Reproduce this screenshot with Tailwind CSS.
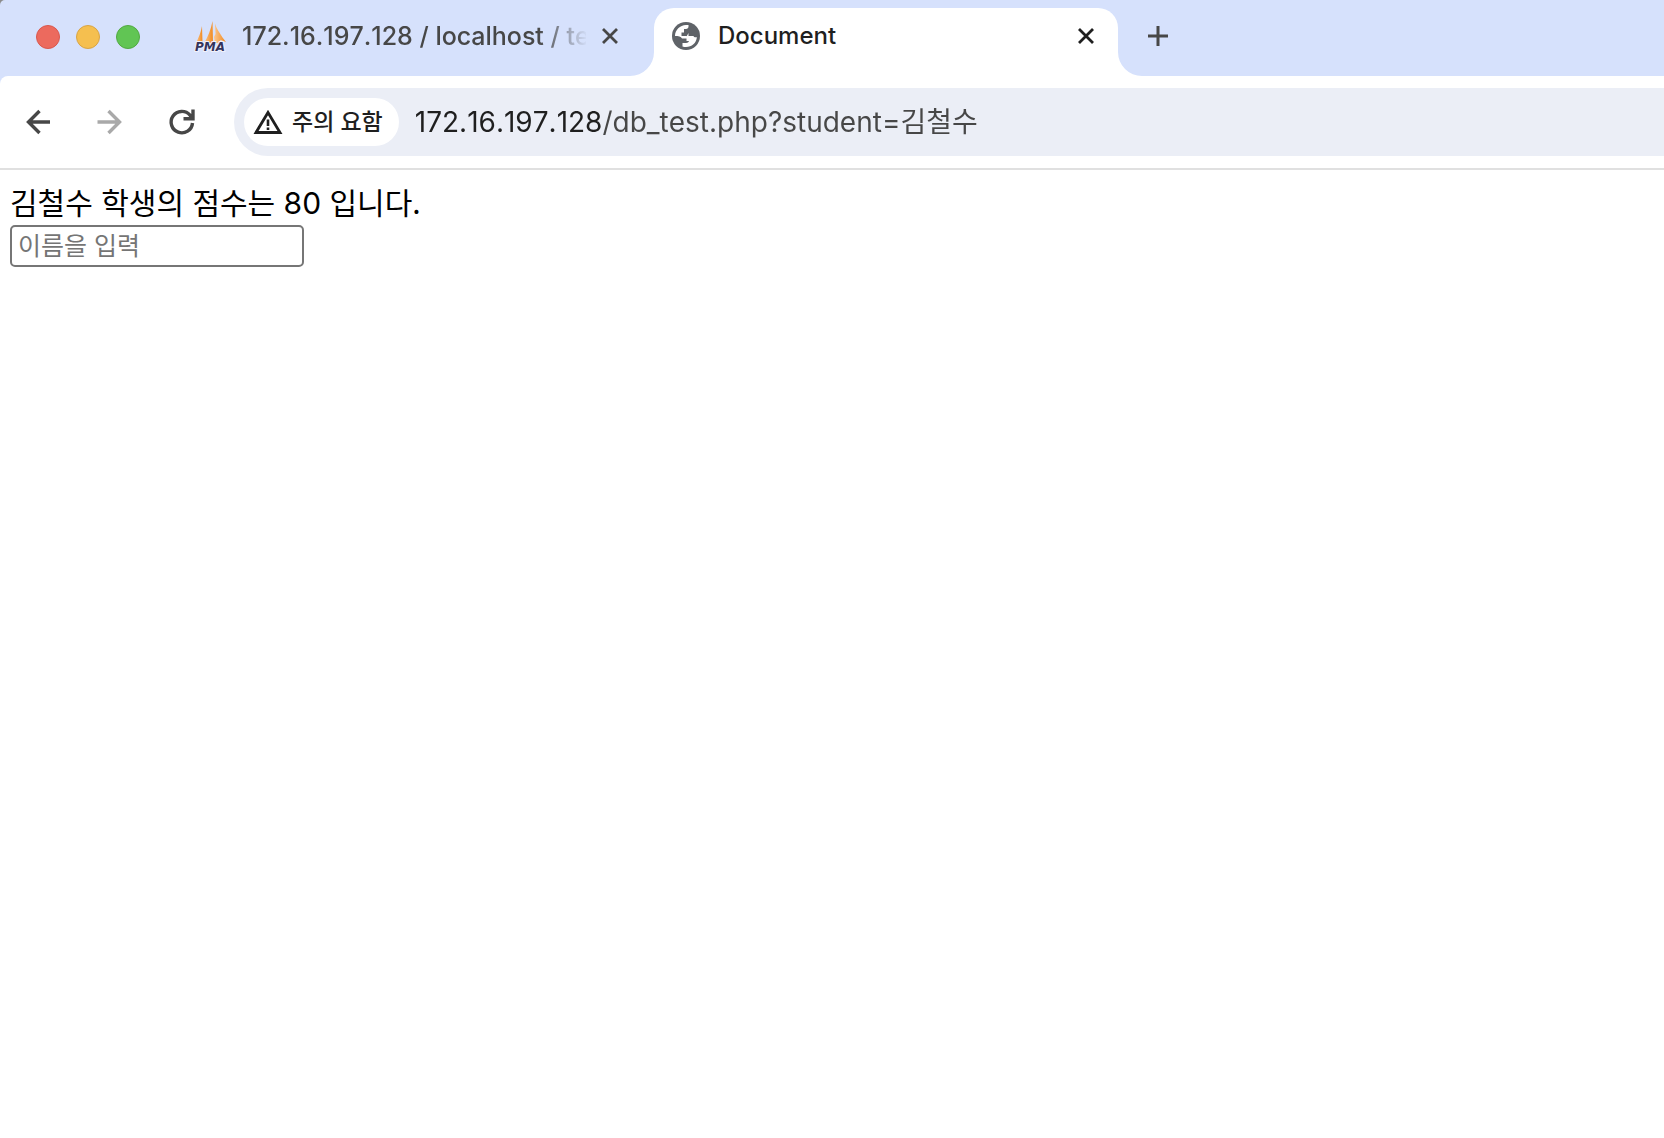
<!DOCTYPE html>
<html lang="ko">
<head>
  <meta charset="UTF-8" />
  <meta name="viewport" content="width=device-width, initial-scale=1.0" />
  <title>Document</title>
  <script src="https://cdn.jsdelivr.net/npm/@tailwindcss/browser@4"></script>
</head>
<body class="bg-white min-h-screen font-[Inter,'Noto_Sans_CJK_KR',sans-serif] [font-kerning:none]">

  <!-- Tab strip -->
  <div class="bg-[#8c8c8c]">
    <header class="flex h-[76px] items-stretch overflow-hidden rounded-tl-[5px] bg-[#d6e1fc]">
      <div class="flex shrink-0 items-center gap-4 pb-0.5 pl-9 pr-[54px]">
        <button type="button" aria-label="Close window" class="size-6 rounded-full border border-[#d9584e] bg-[#ec6a5e]"></button>
        <button type="button" aria-label="Minimize window" class="size-6 rounded-full border border-[#d8a446] bg-[#f5bf4f]"></button>
        <button type="button" aria-label="Zoom window" class="size-6 rounded-full border border-[#52a942] bg-[#61c554]"></button>
      </div>

      <div class="flex w-[460px] shrink-0 items-center pb-1">
        <a href="#" class="flex items-center gap-4 text-[25px] leading-8 font-medium text-[#474747]">
          <svg class="size-8 shrink-0 overflow-visible" viewBox="0 0 32 32" aria-hidden="true">
            <defs>
              <linearGradient id="sail" x1="0" y1="0" x2="1" y2="0">
                <stop offset="0" stop-color="#fbc78f" />
                <stop offset="1" stop-color="#f18a1f" />
              </linearGradient>
            </defs>
            <path d="M8 6 8.500 23H2C4.500 18 7 12 8 6z" fill="url(#sail)" />
            <path d="M18.500 1 19 23H10C14 17 17 9 18.500 1z" fill="url(#sail)" />
            <path d="M21 3.500C22.500 9 26 13 28.500 17.500l3.500 4.500-5.500-2-1 3H21l-1-6 1.500-3z" fill="url(#sail)" />
            <text x="1" y="31" font-family="DejaVu Sans" font-size="12" font-weight="bold" font-style="italic" fill="#34345c" stroke="#f0f0fa" stroke-width="2" paint-order="stroke">PMA</text>
          </svg>
          <span class="w-[344px] whitespace-nowrap mask-[linear-gradient(to_right,black_296px,transparent_346px)]">172.16.197.128 / localhost / te</span>
        </a>
        <button type="button" aria-label="Close tab" class="ml-4 shrink-0 text-[#474747]">
          <svg class="size-4" viewBox="0 0 16 16" fill="none" stroke="currentColor" stroke-width="2.800"><path d="M1 1l14 14M15 1 1 15" /></svg>
        </button>
      </div>

      <div class="relative mt-2 flex w-[464px] shrink-0 items-center rounded-t-[20px] bg-white pb-3 pl-[18px] pr-6">
        <svg class="absolute bottom-0 -left-6 size-6" viewBox="0 0 24 24" fill="#fff" aria-hidden="true"><path d="M24 0v24H0A24 24 0 0 0 24 0z" /></svg>
        <svg class="absolute bottom-0 -right-6 size-6" viewBox="0 0 24 24" fill="#fff" aria-hidden="true"><path d="M0 0v24h24A24 24 0 0 1 0 0z" /></svg>
        <a href="#" class="flex flex-1 items-center gap-[18px] text-2xl font-medium text-[#1f1f1f]">
          <svg class="size-7 shrink-0" viewBox="0 0 28 28" aria-hidden="true">
            <circle cx="14" cy="14" r="14" fill="#5f6368" />
            <path d="M3 14C3 8 8 3 14 3h2.500v1.500c0 1.500-1 2.500-2.500 2.500h-2v3.500h-2.500V14H14c2.500 0 4 1.500 4 4v1h-3.500v-2.500H10c-1-2-3.500-2.500-7-2.500z" fill="#fff" />
            <path d="M16.500 11v3h5c0 1 1.500 1.500 3.400 1.200C24.300 21 19.800 25 14 25c-1.200 0-2.400-.200-3.500-.600V21H14c2 0 3-1 3-2.500 0-2-1-3-2.500-4z" fill="#fff" />
          </svg>
          <span>Document</span>
        </a>
        <button type="button" aria-label="Close tab" class="shrink-0 text-[#1f1f1f]">
          <svg class="size-4" viewBox="0 0 16 16" fill="none" stroke="currentColor" stroke-width="2.800"><path d="M1 1l14 14M15 1 1 15" /></svg>
        </button>
      </div>

      <button type="button" aria-label="New tab" class="ml-[30px] shrink-0 pb-1 text-[#474747]">
        <svg class="size-5" viewBox="0 0 20 20" fill="none" stroke="currentColor" stroke-width="3"><path d="M10 0v20M0 10h20" /></svg>
      </button>
    </header>
  </div>

  <!-- Toolbar -->
  <div class="bg-[#d6e1fc]">
    <nav class="flex items-center overflow-hidden rounded-tl-lg border-b-2 border-[#e0e0e0] bg-white py-3 pl-5">
      <button type="button" aria-label="Back" class="shrink-0 text-[#474747]">
        <svg class="size-9" viewBox="0 0 36 36" fill="none" stroke="currentColor" stroke-width="3.400"><path d="M30 18H8.500M19.500 7 8.500 18l11 11" /></svg>
      </button>
      <button type="button" aria-label="Forward" class="ml-9 shrink-0 text-[#a9a9a9]">
        <svg class="size-9" viewBox="0 0 36 36" fill="none" stroke="currentColor" stroke-width="3.400"><path d="M5.500 18h22M16.500 7l11 11-11 11" /></svg>
      </button>
      <button type="button" aria-label="Reload" class="ml-9 shrink-0 text-[#474747]">
        <svg class="size-9" viewBox="0 0 36 36" fill="none" stroke="currentColor" stroke-width="3.400"><path d="M28.500 19A10.700 10.700 0 1 1 26 11.200L28 14.500M29 5.500v9.200H19.500" /></svg>
      </button>

      <div class="ml-[34px] flex h-[68px] min-w-0 flex-1 items-center rounded-l-full bg-[#ebeef6] pl-[10px]">
        <button type="button" class="flex h-12 shrink-0 items-center gap-2 rounded-full bg-white pl-2 pr-4 text-[23px] font-medium text-[#1f1f1f]">
          <svg class="size-8" viewBox="0 0 32 32" aria-hidden="true">
            <path d="M16 6.500 28 26.500H4z" fill="none" stroke="currentColor" stroke-width="2.800" />
            <path d="M16 13.500v6.500M16 21.500v2.500" stroke="currentColor" stroke-width="2.600" />
          </svg>
          <span>주의 요함</span>
        </button>
        <input type="text" aria-label="Address" value="172.16.197.128/db_test.php?student=김철수"
          class="ml-4 h-12 min-w-0 flex-1 bg-[linear-gradient(to_right,#1f1f1f_188px,#474747_188px)] bg-clip-text pb-1 text-[28px] text-transparent outline-none" />
      </div>
    </nav>
  </div>

  <!-- Page -->
  <main class="px-[10px] pt-[11px] font-['Noto_Sans_CJK_KR',sans-serif]">
    <p class="pb-px text-[30px] leading-[41px] text-black">김철수 학생의 점수는 <span class="font-[Inter]">80</span> 입니다.</p>
    <form>
      <input type="text" name="student" aria-label="이름을 입력" placeholder="이름을 입력"
        class="block h-[42px] w-[294px] rounded-[5px] border-2 border-[#767676] px-[6px] pb-1 text-[25px] placeholder:text-[#757575]" />
    </form>
  </main>

</body>
</html>
